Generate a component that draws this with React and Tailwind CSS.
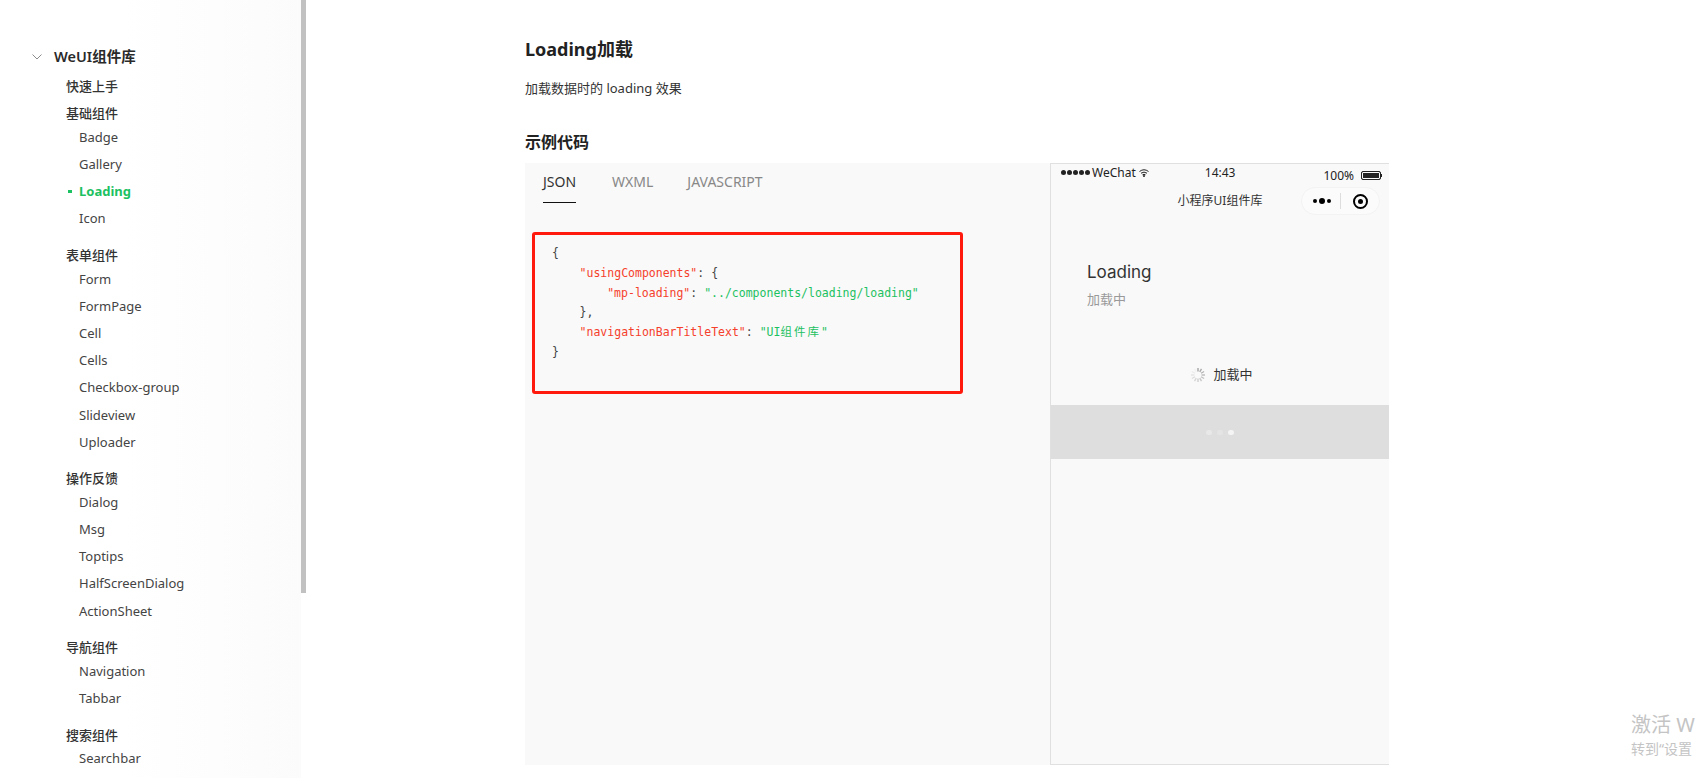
const sections = [
  { title: "快速上手", items: [] },
  { title: "基础组件", items: ["Badge", "Gallery", "Loading", "Icon"] },
  { title: "表单组件", items: ["Form", "FormPage", "Cell", "Cells", "Checkbox-group", "Slideview", "Uploader"] },
  { title: "操作反馈", items: ["Dialog", "Msg", "Toptips", "HalfScreenDialog", "ActionSheet"] },
  { title: "导航组件", items: ["Navigation", "Tabbar"] },
  { title: "搜索组件", items: ["Searchbar"] },
];

const sansFont = "[font-family:'Noto_Sans','Noto_Sans_CJK_SC',sans-serif]";

const Sidebar = () => (
  <aside className="relative h-full w-[306px] shrink-0 overflow-hidden bg-linear-to-r from-white from-40% to-[#fbfbfb] pt-[46px] pl-[32px]">
    <div className="absolute right-0 top-0 h-full w-[5px] bg-white" />
    <div className="absolute right-0 top-0 h-[593px] w-[5px] bg-[#c1c1c1]" />
    <div className="flex h-[22px] items-center">
      <svg width="10" height="6" viewBox="0 0 10 6" fill="none" stroke="#8c8c8c" strokeWidth="1">
        <path d="M0.5 0.5 L5 5 L9.5 0.5" />
      </svg>
      <span className="ml-[12px] text-[14.5px] font-semibold text-[#2a2a2a]">WeUI组件库</span>
    </div>
    <div className="ml-[34px] mt-[9px]">
      {sections.map((section) => (
        <div key={section.title} className={section.items.length ? "mb-[13px]" : "mb-[7px]"}>
          <div className="flex h-[20px] items-center text-[13px] font-medium text-[#333]">{section.title}</div>
          {section.items.map((item) => (
            <div
              key={item}
              className={`relative flex h-[27.2px] items-center pl-[13px] text-[13px] ${
                item === "Loading" ? "font-bold text-[#1cc161]" : "text-[#444]"
              }`}
            >
              {item === "Loading" ? <span className="absolute left-[2px] top-[12px] h-[3px] w-[4px] bg-[#1cc161]" /> : null}
              {item}
            </div>
          ))}
        </div>
      ))}
    </div>
  </aside>
);

const CodeBlock = () => (
  <div className="ml-[7px] mt-[29px] h-[162px] w-[431px] rounded-[3px] border-[3px] border-[#ff1a0d] pl-[17px] pt-[9px] font-['DejaVu_Sans_Mono','Noto_Sans_CJK_SC',monospace] text-[11.5px] leading-[19.8px] text-[#444]">
    <div>{"{"}</div>
    <div className="pl-[27.6px]">
      <span className="text-[#f5402c]">"usingComponents"</span>: {"{"}
    </div>
    <div className="pl-[55.2px]">
      <span className="text-[#f5402c]">"mp-loading"</span>: <span className="text-[#1cc161]">"../components/loading/loading"</span>
    </div>
    <div className="pl-[27.6px]">{"},"}</div>
    <div className="pl-[27.6px]">
      <span className="text-[#f5402c]">"navigationBarTitleText"</span>:{" "}
      <span className="text-[#1cc161]">
        "UI<span className="tracking-[2px]">组件库</span>"
      </span>
    </div>
    <div>{"}"}</div>
  </div>
);

const Spinner = () => (
  <svg width="16" height="16" viewBox="0 0 16 16" strokeWidth="1.4">
    {Array.from({ length: 12 }).map((_, i) => (
      <line
        key={i}
        x1="8"
        y1="1"
        x2="8"
        y2="4.5"
        stroke={`rgb(${165 + ((i * 7) % 84)},${165 + ((i * 7) % 84)},${165 + ((i * 7) % 84)})`}
        transform={`rotate(${i * 30} 8 8)`}
      />
    ))}
  </svg>
);

const Phone = () => (
  <div className="flex h-full w-[339px] shrink-0 flex-col border-l border-t border-b border-[#e0e0e0]">
    <div className="relative flex h-[19px] items-start text-[12px] leading-[17px] text-[#222]">
      <div className="ml-[10px] flex items-center">
        <span className="flex h-[17px] items-center gap-[1px]">
          {[0, 1, 2, 3, 4].map((dot) => (
            <span key={dot} className="h-[5px] w-[5px] rounded-full bg-[#222]" />
          ))}
        </span>
        <span className="ml-[2px]">WeChat</span>
        <svg className="ml-[3px]" width="10" height="8" viewBox="0 0 10 8" fill="none" stroke="#222" strokeWidth="1">
          <path d="M0.5 2.5 Q5 -1 9.5 2.5" />
          <path d="M2 4.2 Q5 2 8 4.2" />
          <path d="M3.5 5.8 Q5 4.8 6.5 5.8" />
          <circle cx="5" cy="7" r="0.6" fill="#222" />
        </svg>
      </div>
      <span className="ml-[56px]">14:43</span>
      <div className="ml-auto mr-[7px] mt-[3px] flex items-center gap-[7px]">
        <span>100%</span>
        <span className="flex items-center">
          <span className="h-[9px] w-[20px] rounded-[2px] border border-[#222] bg-[#222] shadow-[inset_0_0_0_1px_#f8f8f8]" />
          <span className="h-[3px] w-[1px] bg-[#222]" />
        </span>
      </div>
    </div>
    <div className="relative flex h-[36px] items-center justify-center text-[12px] text-[#333]">
      <span>小程序UI组件库</span>
      <div className="absolute right-[9px] top-[4px] flex h-[28px] w-[79px] items-center rounded-full border border-[#f3f3f3] bg-[#fbfbfb]">
        <div className="flex w-[38px] items-center justify-center gap-[2px] pl-[2px]">
          <span className="h-[4px] w-[4px] rounded-full bg-black" />
          <span className="h-[6px] w-[6px] rounded-full bg-black" />
          <span className="h-[4px] w-[4px] rounded-full bg-black" />
        </div>
        <span className="h-[16px] w-px bg-[#ddd]" />
        <div className="flex flex-1 items-center justify-center">
          <span className="flex h-[15px] w-[15px] items-center justify-center rounded-full border-2 border-black">
            <span className="h-[5px] w-[5px] rounded-full bg-black" />
          </span>
        </div>
      </div>
    </div>
    <div className="pl-[36px] pt-[41px]">
      <div className="font-['Inter','Noto_Sans_CJK_SC',sans-serif] text-[17px] leading-[24px] text-[#333]">Loading</div>
      <div className="mt-[6px] text-[13px] leading-[18px] text-[#999]">加载中</div>
    </div>
    <div className="mt-[49px] flex h-[35px] items-center justify-center gap-[7px] pl-[3px] text-[13px] text-[#333]">
      <Spinner />
      <span>加载中</span>
    </div>
    <div className="mt-[13px] flex h-[54px] items-center justify-center gap-[5px] bg-[#dedede]">
      <span className="h-[5px] w-[6px] rounded-full bg-[#e8e8e8]" />
      <span className="h-[5px] w-[6px] rounded-full bg-[#e4e4e4]" />
      <span className="h-[5px] w-[6px] rounded-full bg-[#f4f4f4]" />
    </div>
  </div>
);

const App = () => (
  <div className={`relative flex h-[778px] w-[1698px] overflow-hidden bg-white ${sansFont}`}>
    <Sidebar />
    <main className="ml-[219px] w-[864px] pt-[36px]">
      <h1 className="text-[18px] font-bold leading-[26px] text-[#222]">Loading加载</h1>
      <p className="mt-[16px] text-[13px] leading-[20px] text-[#333]">加载数据时的 loading 效果</p>
      <h2 className="mt-[32px] text-[16px] font-bold leading-[24px] text-[#222]">示例代码</h2>
      <div className="mt-[9px] flex h-[602px] bg-[#f9f9f9]">
        <div className="flex-1">
          <div className="flex pl-[18px] text-[14px]">
            <div className="h-[40px] border-b border-[#111] pt-[9px] leading-[20px] text-[#333]">JSON</div>
            <div className="ml-[36px] pt-[9px] leading-[20px] text-[#888]">WXML</div>
            <div className="ml-[34px] pt-[9px] leading-[20px] text-[#888]">JAVASCRIPT</div>
          </div>
          <CodeBlock />
        </div>
        <Phone />
      </div>
    </main>
    <div className="absolute left-[1631px] top-[712px] whitespace-nowrap text-[#c4c4c4]">
      <div className="text-[20px] leading-[26px]">激活 W</div>
      <div className="text-[14px] leading-[22px]">转到“设置</div>
    </div>
  </div>
);

export default App;
